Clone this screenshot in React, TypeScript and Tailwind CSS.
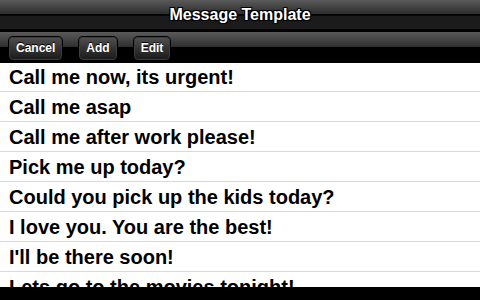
const TEMPLATES = [
  'Call me now, its urgent!',
  'Call me asap',
  'Call me after work please!',
  'Pick me up today?',
  'Could you pick up the kids today?',
  'I love you. You are the best!',
  "I'll be there soon!",
  'Lets go to the movies tonight!',
]

function BarButton({ label }: { label: string }) {
  return (
    <button className="h-[23px] px-[6px] rounded-[4px] border border-[#3c3c3c] bg-[linear-gradient(to_bottom,#4e4e4e,#333_50%,#1c1c1c)] shadow-[0_0_0_1px_#000] text-[12px] font-bold leading-none text-white [text-shadow:0_-1px_0_#000]">
      {label}
    </button>
  )
}

export default function App() {
  return (
    <div className="relative w-[480px] h-[300px] overflow-hidden bg-white flex flex-col font-['Liberation_Sans',Arial,sans-serif]">
      {/* title */}
      <div className="h-[32px] shrink-0 flex items-center justify-center pb-[2px] bg-[linear-gradient(to_bottom,#5a5a5a_0px,#2c2c2c_14px,#050505_14px,#050505_16px,#1b1b1b_16px,#1b1b1b_29px,#000_29px)]">
        <span className="text-[16px] font-bold text-white leading-none [text-shadow:1px_1px_0_#000,-1px_-1px_0_#000,1px_-1px_0_#000,-1px_1px_0_#000,0_0_2px_#000]">
          Message Template
        </span>
      </div>

      {/* toolbar */}
      <div className="h-[31px] shrink-0 flex items-center gap-[17px] pl-[9px] pt-[1px] bg-[linear-gradient(to_bottom,#5a5a5a_0px,#2e2e2e_15px,#000_15px)]">
        <BarButton label="Cancel" />
        <BarButton label="Add" />
        <BarButton label="Edit" />
      </div>

      {/* list */}
      <div className="flex flex-col">
        {TEMPLATES.map((t, i) => (
          <div
            key={t}
            className={`${i === 0 ? 'h-[29px]' : 'h-[30px]'} shrink-0 flex items-center pl-[9px] border-b border-[#dadada] text-[20px] font-bold text-black leading-none whitespace-nowrap`}
          >
            {t}
          </div>
        ))}
      </div>

      {/* cut-off bottom bar */}
      <div className="absolute left-0 right-0 bottom-0 h-[13px] bg-black" />
    </div>
  )
}
